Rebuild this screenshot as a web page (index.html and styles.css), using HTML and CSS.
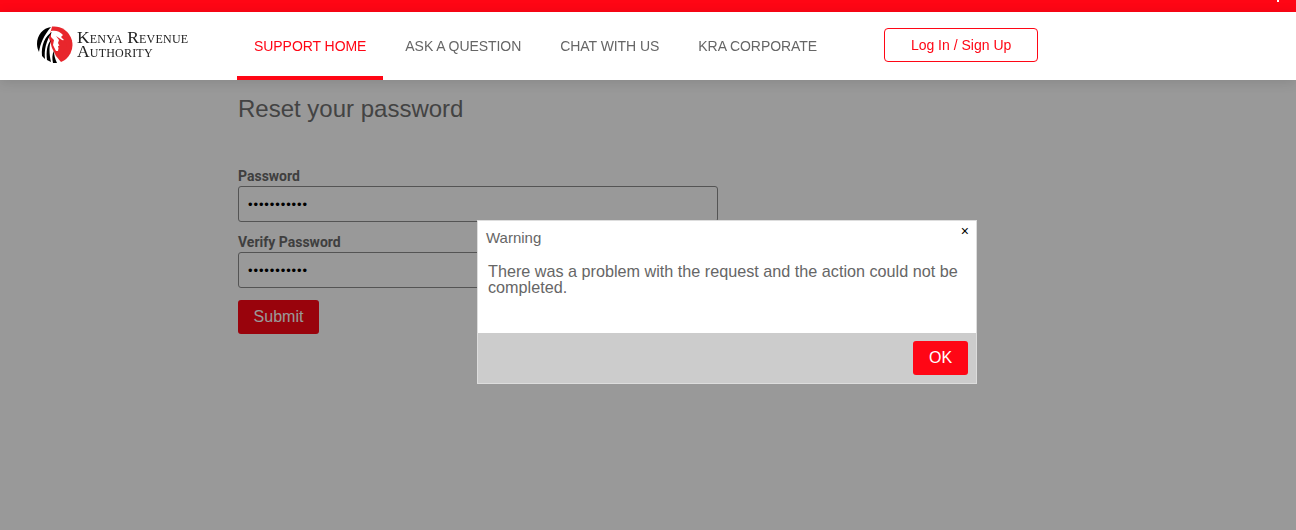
FILE: index.html
```html
<!DOCTYPE html>
<html>
	<head>
		<meta charset="UTF-8">
		<title>Reset your password</title>
		<link rel="stylesheet" href="styles.css">
	</head>
	<body>
		<div class="topbar"><span class="topmark"></span></div>
		<div class="header">
			<a class="logo" href="#">
				<svg width="38" height="38" viewBox="0 0 38 38">
					<path d="M16 0.500A18.500 18.500 0 0 1 25 36L20 30L16 22L13 12Z" fill="#e8262c"/>
					<path d="M15 5C19 4 24 5 27 9L25 11L28 14L24 15L26 19L22 20L23 25L20 25L17 19L18 14L15 11Z" fill="#fff"/>
					<path d="M20 10L26 14L30 17L31 21L28 24L26 29L23 30L22 24L24 21L22 17L23 14Z" fill="#e8262c"/>
					<path d="M15 1C7 2 1 9 1 18C1 21 2 24 3 26C4 18 8 9 15 1Z" fill="#000"/>
					<path d="M16 6C9 10 5 19 6 30L9 33C8 24 10 15 16 6Z" fill="#000"/>
					<path d="M15 14C11 18 10 26 11 34L15 36C13 28 13 20 15 14Z" fill="#000"/>
					<path d="M18 25C16 28 16 33 17 37L21 37C19 33 18 29 18 25Z" fill="#000"/>
				</svg>
				<span class="logo-text">
					<span>Kenya Revenue</span>
					<span>Authority</span>
				</span>
			</a>
			<ul class="nav">
				<li class="active"><a href="#">SUPPORT HOME</a></li>
				<li><a href="#">ASK A QUESTION</a></li>
				<li><a href="#">CHAT WITH US</a></li>
				<li><a href="#">KRA CORPORATE</a></li>
			</ul>
			<a class="login" href="#">Log In / Sign Up</a>
		</div>
		<div class="main">
			<h1>Reset your password</h1>
			<form class="reset">
				<label for="pass1">Password</label>
				<input id="pass1" type="password" value="aaaaaaaaaaa">
				<label for="pass2">Verify Password</label>
				<input id="pass2" type="password" value="aaaaaaaaaaa">
				<button class="submit" type="button">Submit</button>
			</form>
		</div>
		<div class="overlay"></div>
		<div class="dialog">
			<div class="dialog-body">
				<span class="close">×</span>
				<div class="dialog-title">Warning</div>
				<p>There was a problem with the request and the action could not be completed.</p>
			</div>
			<div class="dialog-foot">
				<button class="ok" type="button">OK</button>
			</div>
		</div>
	</body>
</html>
```
FILE: styles.css
```css
*{
	margin:0px;
	padding:0px;
	box-sizing:border-box;
	list-style:none;
}
html,body{
	height:100%;
	overflow:hidden;
}
body{
	background:#fff;
	font-family:"Liberation Sans",Arial,sans-serif;
	color:#555;
}
a{
	text-decoration:none;
}
.topbar{
	height:12px;
	background:#ff0615;
	position:relative;
	z-index:3;
}
.topmark{
	position:absolute;
	left:1277px;
	top:0px;
	width:2px;
	height:2px;
	background:#fff;
}
.header{
	height:68px;
	background:#fff;
	display:flex;
	position:relative;
	z-index:3;
	box-shadow:0 2px 12px rgba(0,0,0,.12);
}
.logo{
	width:237px;
	padding:14px 0 0 36px;
	display:flex;
	gap:3px;
	color:#222;
}
.logo svg{
	flex:none;
}
.logo-text{
	font-family:"Liberation Serif",serif;
	font-variant:small-caps;
	font-size:17.500px;
	letter-spacing:0.200px;
	line-height:14px;
	padding-top:4px;
	white-space:nowrap;
}
.logo-text span{
	display:block;
}
.nav{
	display:flex;
	gap:5px;
}
.nav a{
	display:block;
	height:68px;
	padding:26px 17px 0;
	font-size:14px;
	letter-spacing:-0.060px;
	line-height:16px;
	color:#666;
	white-space:nowrap;
}
.nav .active a{
	color:#ff0615;
	border-bottom:4px solid #ff0615;
}
.login{
	width:154px;
	height:34px;
	margin:16px 0 0 50px;
	border:1px solid #ff0615;
	border-radius:4px;
	color:#ff0615;
	font-size:14px;
	line-height:32px;
	text-align:center;
}
.main{
	padding:15px 0 0 238px;
}
h1{
	font-size:24px;
	font-weight:normal;
	line-height:28px;
	color:#707070;
}
.reset{
	width:480px;
	margin-top:43px;
}
.reset label{
	display:block;
	font-family:Roboto,"Liberation Sans",sans-serif;
	font-size:14px;
	font-weight:bold;
	line-height:20px;
	color:#6a6a6a;
}
.reset input{
	display:block;
	width:480px;
	height:36px;
	margin-bottom:10px;
	padding:0 9px;
	border:1px solid #8c8c8c;
	border-radius:3px;
	background:#fff;
	font-family:"Liberation Sans",sans-serif;
	font-size:13px;
	letter-spacing:0.900px;
	color:#000;
	outline:none;
}
.submit{
	display:block;
	width:81px;
	height:34px;
	margin-top:12px;
	border:none;
	border-radius:3px;
	background:#ff0615;
	color:#fff;
	font-family:"Liberation Sans",sans-serif;
	font-size:16px;
}
.overlay{
	position:fixed;
	left:0px;
	top:0px;
	right:0px;
	bottom:0px;
	background:rgba(0,0,0,.4);
	z-index:2;
}
.dialog{
	position:absolute;
	left:477px;
	top:220px;
	width:500px;
	height:164px;
	border:1px solid #ddd;
	background:#fff;
	z-index:4;
	display:flex;
	flex-direction:column;
}
.dialog-body{
	flex:1;
	position:relative;
	padding:8px 8px 0;
}
.dialog-title{
	font-size:15px;
	line-height:18px;
	color:#666;
}
.dialog-body p{
	margin:16px 0 0 2px;
	font-size:16.200px;
	line-height:16px;
	color:#666;
}
.close{
	position:absolute;
	right:7px;
	top:2px;
	font-size:14px;
	line-height:16px;
	color:#000;
}
.dialog-foot{
	height:50px;
	background:#ccc;
	padding:8px 8px 0 0;
	display:flex;
	justify-content:flex-end;
}
.ok{
	width:55px;
	height:34px;
	border:none;
	border-radius:3px;
	background:#ff0615;
	color:#fff;
	font-family:"Liberation Sans",sans-serif;
	font-size:16px;
}
```
